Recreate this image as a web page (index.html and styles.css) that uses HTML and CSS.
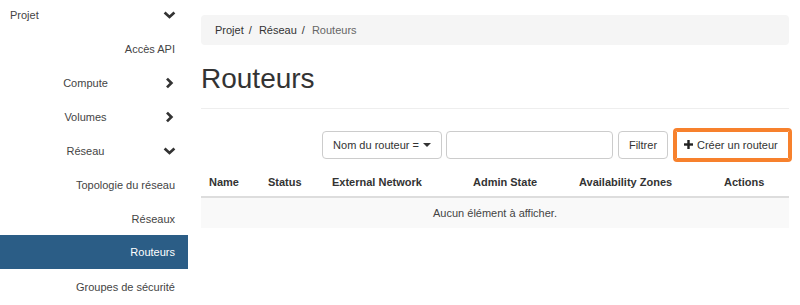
FILE: index.html
```html
<!DOCTYPE html>
<html lang="fr">
<head>
  <meta charset="UTF-8">
  <meta name="viewport" content="width=device-width, initial-scale=1.0">
  <title>Routeurs</title>
  <link rel="stylesheet" href="styles.css">
</head>
<body>
  <nav class="sidebar">
    <div class="nav-item level1">
      <span class="label">Projet</span>
      <svg class="chev" width="13" height="8" viewBox="0 0 13 8"><polyline points="1.6,1.6 6.5,6 11.4,1.6"/></svg>
    </div>
    <div class="nav-item leaf">Accès API</div>
    <div class="nav-item level2">
      <span class="label">Compute</span>
      <svg class="chev" width="13" height="12" viewBox="0 0 13 12"><polyline points="4,1.6 8.4,6 4,10.4"/></svg>
    </div>
    <div class="nav-item level2">
      <span class="label">Volumes</span>
      <svg class="chev" width="13" height="12" viewBox="0 0 13 12"><polyline points="4,1.6 8.4,6 4,10.4"/></svg>
    </div>
    <div class="nav-item level2">
      <span class="label">Réseau</span>
      <svg class="chev" width="13" height="8" viewBox="0 0 13 8"><polyline points="1.6,1.6 6.5,6 11.4,1.6"/></svg>
    </div>
    <div class="nav-item leaf">Topologie du réseau</div>
    <div class="nav-item leaf">Réseaux</div>
    <div class="nav-item leaf active">Routeurs</div>
    <div class="nav-item leaf">Groupes de sécurité</div>
  </nav>

  <main class="content">
    <ol class="breadcrumb">
      <li>Projet</li>
      <li>Réseau</li>
      <li class="current">Routeurs</li>
    </ol>

    <div class="page-header">
      <h1>Routeurs</h1>
    </div>

    <div class="toolbar">
      <button type="button" class="btn">Nom du routeur = <span class="caret"></span></button>
      <input type="text" class="search">
      <button type="button" class="btn btn-filter">Filtrer</button>
      <button type="button" class="btn btn-create">
        <svg width="9" height="9" viewBox="0 0 9 9"><rect x="3.3" y="0" width="2.4" height="9"/><rect x="0" y="3.3" width="9" height="2.4"/></svg>
        Créer un routeur
      </button>
    </div>

    <table class="table">
      <thead>
        <tr>
          <th class="c-name">Name</th>
          <th class="c-status">Status</th>
          <th class="c-ext">External Network</th>
          <th class="c-admin">Admin State</th>
          <th class="c-zones">Availability Zones</th>
          <th class="c-actions">Actions</th>
        </tr>
      </thead>
      <tbody>
        <tr class="empty">
          <td colspan="6">Aucun élément à afficher.</td>
        </tr>
      </tbody>
    </table>
  </main>
</body>
</html>
```

FILE: styles.css
```css
body {
  margin: 0;
  display: flex;
  font-family: "Liberation Sans", Arial, sans-serif;
  font-size: 11px;
  color: #333;
  background: #fff;
}

.sidebar {
  width: 188px;
  flex-shrink: 0;
  margin-top: -3px;
}
.nav-item {
  height: 34px;
  display: flex;
  align-items: center;
  padding: 2px 12px 0 10px;
  box-sizing: border-box;
  color: #444;
}
.nav-item .label {
  flex: 1;
}
.level2 .label {
  text-align: center;
  padding-right: 2px;
}
.leaf {
  justify-content: flex-end;
  padding-right: 13px;
}
.active {
  background: #2b5d86;
  color: #fff;
  padding-top: 0;
}
.chev {
  fill: none;
  stroke: #333;
  stroke-width: 2.7;
}

.content {
  width: 588px;
  margin-left: 13px;
}
.breadcrumb {
  list-style: none;
  margin: 15px 0 0;
  padding: 0 14px;
  height: 30px;
  line-height: 30px;
  background: #f5f5f5;
  border-radius: 4px;
  display: flex;
}
.breadcrumb li + li::before {
  content: "/\00a0";
  padding: 0 4px 0 5px;
  color: #333;
}
.breadcrumb .current {
  color: #666;
}

.page-header {
  padding-bottom: 13px;
  border-bottom: 1px solid #eee;
}
.page-header h1 {
  margin: 19px 0 0;
  font-size: 28px;
  font-weight: normal;
  line-height: 1.1;
  color: #333;
}

.toolbar {
  display: flex;
  justify-content: flex-end;
  margin-top: 22px;
  height: 28px;
}
.btn {
  height: 28px;
  padding: 0 10px;
  background: #fff;
  border: 1px solid #ccc;
  border-radius: 4px;
  font-family: inherit;
  font-size: 11px;
  color: #333;
  display: flex;
  align-items: center;
  gap: 4px;
}
.caret {
  width: 0;
  height: 0;
  border-left: 4px solid transparent;
  border-right: 4px solid transparent;
  border-top: 4px solid #333;
}
.search {
  width: 167px;
  height: 28px;
  box-sizing: border-box;
  margin: 0 5px 0 4px;
  border: 1px solid #ccc;
  border-radius: 4px;
}
.btn-filter {
  width: 50px;
  justify-content: center;
}
.btn-create {
  margin-left: 8px;
  width: 113px;
  padding: 0 7px;
  border-radius: 1px;
  outline: 3px solid #f7812d;
  border-color: #f7812d;
}
.btn-create svg {
  fill: #222;
}

.table {
  width: 100%;
  margin-top: 10px;
  border-collapse: collapse;
}
.table th {
  text-align: left;
  padding: 6px 8px;
  line-height: 15px;
  border-bottom: 2px solid #ddd;
  font-weight: bold;
  color: #333;
}
.c-name { width: 43px; }
.c-status { width: 48px; }
.c-ext { width: 125px; }
.c-admin { width: 90px; }
.c-zones { width: 129px; }
.table td {
  padding: 7px 8px;
  line-height: 16px;
  text-align: center;
  background: #f9f9f9;
  color: #444;
}
```
